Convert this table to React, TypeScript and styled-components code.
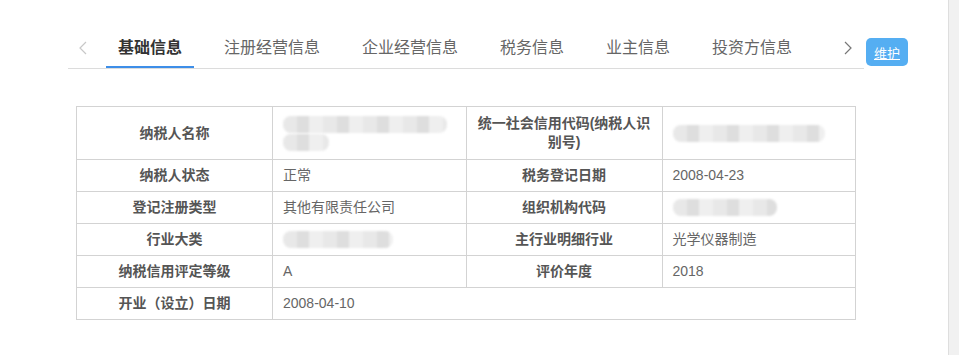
import React, { useState } from "react";
import styled, { createGlobalStyle } from "styled-components";

const GlobalStyle = createGlobalStyle`
  html, body {
    margin: 0;
    padding: 0;
    background: #fff;
    font-family: "Liberation Sans", "Noto Sans CJK SC", sans-serif;
  }
`;

const tabs = ["基础信息", "注册经营信息", "企业经营信息", "税务信息", "业主信息", "投资方信息"];

type Cell = { label: string; value?: string; mask?: number[] };

const rows: [Cell, Cell | null][] = [
  [
    { label: "纳税人名称", mask: [164, 46] },
    { label: "统一社会信用代码(纳税人识别号)", mask: [152] },
  ],
  [
    { label: "纳税人状态", value: "正常" },
    { label: "税务登记日期", value: "2008-04-23" },
  ],
  [
    { label: "登记注册类型", value: "其他有限责任公司" },
    { label: "组织机构代码", mask: [104] },
  ],
  [
    { label: "行业大类", mask: [110] },
    { label: "主行业明细行业", value: "光学仪器制造" },
  ],
  [
    { label: "纳税信用评定等级", value: "A" },
    { label: "评价年度", value: "2018" },
  ],
  [{ label: "开业（设立）日期", value: "2008-04-10" }, null],
];

export default function App() {
  const [active, setActive] = useState(0);

  return (
    <>
      <GlobalStyle />
      <Page>
        <Main>
          <Header>
            <Nav>
              <Arrow disabled>
                <svg width="8" height="14" viewBox="0 0 8 14" fill="none">
                  <path d="M7 1L1 7l6 6" stroke="currentColor" strokeWidth="1.2" />
                </svg>
              </Arrow>
              <TabList>
                {tabs.map((t, i) => (
                  <Tab key={t} active={i === active} onClick={() => setActive(i)}>
                    {t}
                  </Tab>
                ))}
              </TabList>
              <Arrow>
                <svg width="8" height="14" viewBox="0 0 8 14" fill="none">
                  <path d="M1 1l6 6-6 6" stroke="currentColor" strokeWidth="1.2" />
                </svg>
              </Arrow>
            </Nav>
            <EditButton>维护</EditButton>
          </Header>

          <InfoTable>
            <tbody>
              {rows.map(([a, b], i) => (
                <Row key={a.label} tall={i === 0}>
                  <Label>{a.label}</Label>
                  <Value colSpan={b ? 1 : 3}>
                    {a.mask ? <MaskLines widths={a.mask} /> : a.value}
                  </Value>
                  {b && (
                    <>
                      <Label>{b.label}</Label>
                      <Value>{b.mask ? <MaskLines widths={b.mask} /> : b.value}</Value>
                    </>
                  )}
                </Row>
              ))}
            </tbody>
          </InfoTable>
        </Main>
        <ScrollTrack />
      </Page>
    </>
  );
}

function MaskLines({ widths }: { widths: number[] }) {
  return (
    <MaskStack>
      {widths.map((w, i) => (
        <Mask key={i} style={{ width: w }} />
      ))}
    </MaskStack>
  );
}

const Page = styled.div`
  display: flex;
  width: 959px;
  height: 355px;
  overflow: hidden;
`;

const Main = styled.div`
  flex: 1;
  padding: 28px 0 0 68px;
`;

const ScrollTrack = styled.div`
  width: 10px;
  background: #f1f1f1;
  border-left: 1px solid #dedede;
`;

const Header = styled.div`
  display: flex;
  align-items: flex-start;
`;

const Nav = styled.div`
  display: flex;
  align-items: center;
  width: 796px;
  height: 40px;
  border-bottom: 1px solid #dcdcdc;
`;

const Arrow = styled.div<{ disabled?: boolean }>`
  display: flex;
  align-items: center;
  justify-content: center;
  width: 30px;
  height: 40px;
  color: ${(p) => (p.disabled ? "#c8c8c8" : "#777")};
  cursor: ${(p) => (p.disabled ? "default" : "pointer")};
  &:first-child {
    width: 30px;
    margin-right: 8px;
  }
  &:last-child {
    margin-left: auto;
    width: 16px;
    margin-right: 8px;
  }
`;

const TabList = styled.div`
  display: flex;
  gap: 18px;
  height: 40px;
`;

const Tab = styled.div<{ active?: boolean }>`
  padding: 0 12px;
  height: 40px;
  line-height: 40px;
  font-size: 16px;
  white-space: nowrap;
  color: ${(p) => (p.active ? "#333" : "#666")};
  font-weight: ${(p) => (p.active ? "bold" : "normal")};
  box-shadow: ${(p) => (p.active ? "inset 0 -2px 0 #3d8ee8" : "none")};
  cursor: pointer;
`;

const EditButton = styled.button`
  margin: 10px 0 0 2px;
  width: 42px;
  height: 28px;
  padding: 0;
  border: none;
  border-radius: 5px;
  background: #55aef2;
  color: #fff;
  font-size: 13px;
  font-family: inherit;
  text-decoration: underline;
  cursor: pointer;
`;

const InfoTable = styled.table`
  margin: 37px 0 0 8px;
  width: 780px;
  border-collapse: collapse;
  table-layout: fixed;
  font-size: 14px;
`;

const Row = styled.tr<{ tall?: boolean }>`
  height: ${(p) => (p.tall ? "53px" : "32px")};
`;

const Label = styled.td`
  width: 175px;
  padding: 0 10px;
  border: 1px solid #d3d3d3;
  text-align: center;
  line-height: 19px;
  font-weight: bold;
  color: #555;
`;

const Value = styled.td`
  padding: 0 10px;
  border: 1px solid #d3d3d3;
  line-height: 19px;
  color: #666;
`;

const MaskStack = styled.div`
  display: flex;
  flex-direction: column;
  gap: 1px;
`;

const Mask = styled.span`
  display: block;
  height: 17px;
  border-radius: 8px;
  background: repeating-linear-gradient(
    90deg,
    #e8e8e8 0 14px,
    #dedede 14px 26px,
    #efefef 26px 40px
  );
  filter: blur(1.2px);
`;
